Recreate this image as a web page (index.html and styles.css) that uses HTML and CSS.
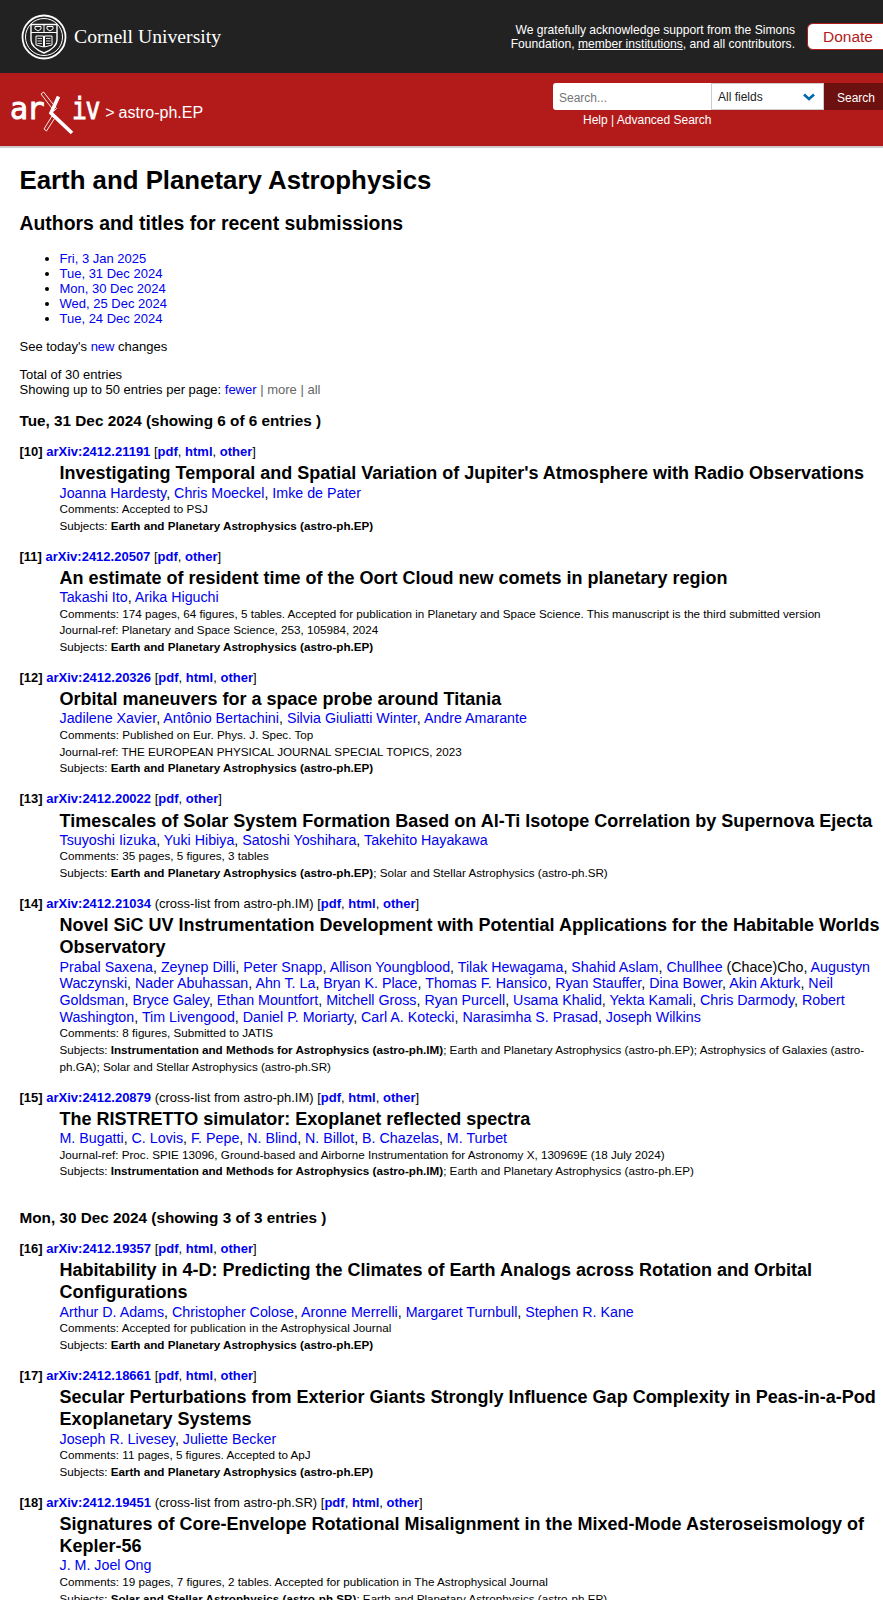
FILE: index.html
```html
<!DOCTYPE html>
<html lang="en">
<head>
    <meta charset="UTF-8">
    <meta name="viewport" content="width=device-width, initial-scale=1.0">
    <title>Earth and Planetary Astrophysics</title>
    <link rel="stylesheet" href="styles.css">
</head>
<body>
    <div class="cu-bar">
        <a class="cu-logo" href="#">
            <svg class="cu-seal" width="46" height="46" viewBox="0 0 46 46" fill="none" stroke="#fff">
                <circle cx="23" cy="23" r="21.5" stroke-width="1.8"/>
                <circle cx="23" cy="23" r="18.5" stroke-width="1"/>
                <path d="M10 10.500H36V26C36 33 29 36.500 23 39C17 36.500 10 33 10 26Z" stroke-width="1.400"/>
                <path d="M10 18.500H36M23 11V18.500" stroke-width="1"/>
                <path d="M14 12.500H20V15L17 17L14 15ZM26 12.500H32V15L29 17L26 15Z" stroke-width="1"/>
                <path d="M15 22H22.500V33L15 31ZM31 22H23.500V33L31 31Z" stroke-width="1"/>
                <path d="M16.500 24.500H21M16.500 27H21M16.500 29.500H21M25 24.500H29.500M25 27H29.500M25 29.500H29.500" stroke-width=".8"/>
            </svg>
            <span class="cu-name">Cornell University</span>
        </a>
        <p class="cu-thanks">We gratefully acknowledge support from the Simons Foundation, <a href="#">member institutions</a>, and all contributors.</p>
        <a class="donate" href="#">Donate</a>
    </div>

    <div class="arxiv-bar">
        <div class="crumbs">
            <a class="arxiv-logo" href="#">
                <span class="logo-ar">ar</span>
                <svg class="arxiv-x" width="34" height="45" viewBox="0 0 34 45" fill="none" stroke="#fff">
                    <path d="M1 4L3.500 2L16.500 18.500L14 21Z" stroke-width=".9"/>
                    <path d="M12 26L14.500 28.500L6.500 41L4 39Z" stroke-width=".9"/>
                    <path d="M18.500 6.500L11 23L32 43" stroke-width="3.600"/>
                </svg>
                <span class="logo-iv">iv</span>
            </a>
            <span class="crumb-sep">&gt;</span>
            <span class="crumb-cat">astro-ph.EP</span>
        </div>
        <div class="search-box">
            <div class="search-row">
                <input class="search-input" type="text" placeholder="Search...">
                <div class="search-field">
                    <span>All fields</span>
                    <svg width="12" height="8" viewBox="0 0 12 8" fill="none"><path d="M1 1.500L6 6L11 1.500" stroke="#0068ac" stroke-width="2.600"/></svg>
                </div>
                <button class="search-btn" type="button">Search</button>
            </div>
            <div class="search-links"><a href="#">Help</a> | <a href="#">Advanced Search</a></div>
        </div>
    </div>

    <div class="content">
        <h1>Earth and Planetary Astrophysics</h1>
        <h2>Authors and titles for recent submissions</h2>
        <ul class="days">
            <li><a href="#">Fri, 3 Jan 2025</a></li>
            <li><a href="#">Tue, 31 Dec 2024</a></li>
            <li><a href="#">Mon, 30 Dec 2024</a></li>
            <li><a href="#">Wed, 25 Dec 2024</a></li>
            <li><a href="#">Tue, 24 Dec 2024</a></li>
        </ul>
        <p class="note">See today's <a href="#">new</a> changes</p>
        <p class="note">Total of 30 entries<br>Showing up to 50 entries per page: <a href="#">fewer</a> <span class="off">| more | all</span></p>

        <h3>Tue, 31 Dec 2024 (showing 6 of 6 entries )</h3>
        <dl>
            <dt><b>[10]</b> <a class="id" href="#">arXiv:2412.21191</a> [<a href="#">pdf</a>, <a href="#">html</a>, <a href="#">other</a>]</dt>
            <dd>
                <div class="title">Investigating Temporal and Spatial Variation of Jupiter's Atmosphere with Radio Observations</div>
                <div class="authors"><a href="#">Joanna Hardesty</a>, <a href="#">Chris Moeckel</a>, <a href="#">Imke de Pater</a></div>
                <div class="meta">Comments: Accepted to PSJ</div>
                <div class="meta">Subjects: <b>Earth and Planetary Astrophysics (astro-ph.EP)</b></div>
            </dd>
            <dt><b>[11]</b> <a class="id" href="#">arXiv:2412.20507</a> [<a href="#">pdf</a>, <a href="#">other</a>]</dt>
            <dd>
                <div class="title">An estimate of resident time of the Oort Cloud new comets in planetary region</div>
                <div class="authors"><a href="#">Takashi Ito</a>, <a href="#">Arika Higuchi</a></div>
                <div class="meta">Comments: 174 pages, 64 figures, 5 tables. Accepted for publication in Planetary and Space Science. This manuscript is the third submitted version</div>
                <div class="meta">Journal-ref: Planetary and Space Science, 253, 105984, 2024</div>
                <div class="meta">Subjects: <b>Earth and Planetary Astrophysics (astro-ph.EP)</b></div>
            </dd>
            <dt><b>[12]</b> <a class="id" href="#">arXiv:2412.20326</a> [<a href="#">pdf</a>, <a href="#">html</a>, <a href="#">other</a>]</dt>
            <dd>
                <div class="title">Orbital maneuvers for a space probe around Titania</div>
                <div class="authors"><a href="#">Jadilene Xavier</a>, <a href="#">Antônio Bertachini</a>, <a href="#">Silvia Giuliatti Winter</a>, <a href="#">Andre Amarante</a></div>
                <div class="meta">Comments: Published on Eur. Phys. J. Spec. Top</div>
                <div class="meta">Journal-ref: THE EUROPEAN PHYSICAL JOURNAL SPECIAL TOPICS, 2023</div>
                <div class="meta">Subjects: <b>Earth and Planetary Astrophysics (astro-ph.EP)</b></div>
            </dd>
            <dt><b>[13]</b> <a class="id" href="#">arXiv:2412.20022</a> [<a href="#">pdf</a>, <a href="#">other</a>]</dt>
            <dd>
                <div class="title">Timescales of Solar System Formation Based on Al-Ti Isotope Correlation by Supernova Ejecta</div>
                <div class="authors"><a href="#">Tsuyoshi Iizuka</a>, <a href="#">Yuki Hibiya</a>, <a href="#">Satoshi Yoshihara</a>, <a href="#">Takehito Hayakawa</a></div>
                <div class="meta">Comments: 35 pages, 5 figures, 3 tables</div>
                <div class="meta">Subjects: <b>Earth and Planetary Astrophysics (astro-ph.EP)</b>; Solar and Stellar Astrophysics (astro-ph.SR)</div>
            </dd>
            <dt><b>[14]</b> <a class="id" href="#">arXiv:2412.21034</a> (cross-list from astro-ph.IM) [<a href="#">pdf</a>, <a href="#">html</a>, <a href="#">other</a>]</dt>
            <dd>
                <div class="title">Novel SiC UV Instrumentation Development with Potential Applications for the Habitable Worlds Observatory</div>
                <div class="authors"><a href="#">Prabal Saxena</a>, <a href="#">Zeynep Dilli</a>, <a href="#">Peter Snapp</a>, <a href="#">Allison Youngblood</a>, <a href="#">Tilak Hewagama</a>, <a href="#">Shahid Aslam</a>, <a href="#">Chullhee</a> (Chace)Cho, <a href="#">Augustyn Waczynski</a>, <a href="#">Nader Abuhassan</a>, <a href="#">Ahn T. La</a>, <a href="#">Bryan K. Place</a>, <a href="#">Thomas F. Hansico</a>, <a href="#">Ryan Stauffer</a>, <a href="#">Dina Bower</a>, <a href="#">Akin Akturk</a>, <a href="#">Neil Goldsman</a>, <a href="#">Bryce Galey</a>, <a href="#">Ethan Mountfort</a>, <a href="#">Mitchell Gross</a>, <a href="#">Ryan Purcell</a>, <a href="#">Usama Khalid</a>, <a href="#">Yekta Kamali</a>, <a href="#">Chris Darmody</a>, <a href="#">Robert Washington</a>, <a href="#">Tim Livengood</a>, <a href="#">Daniel P. Moriarty</a>, <a href="#">Carl A. Kotecki</a>, <a href="#">Narasimha S. Prasad</a>, <a href="#">Joseph Wilkins</a></div>
                <div class="meta">Comments: 8 figures, Submitted to JATIS</div>
                <div class="meta">Subjects: <b>Instrumentation and Methods for Astrophysics (astro-ph.IM)</b>; Earth and Planetary Astrophysics (astro-ph.EP); Astrophysics of Galaxies (astro-ph.GA); Solar and Stellar Astrophysics (astro-ph.SR)</div>
            </dd>
            <dt><b>[15]</b> <a class="id" href="#">arXiv:2412.20879</a> (cross-list from astro-ph.IM) [<a href="#">pdf</a>, <a href="#">html</a>, <a href="#">other</a>]</dt>
            <dd>
                <div class="title">The RISTRETTO simulator: Exoplanet reflected spectra</div>
                <div class="authors"><a href="#">M. Bugatti</a>, <a href="#">C. Lovis</a>, <a href="#">F. Pepe</a>, <a href="#">N. Blind</a>, <a href="#">N. Billot</a>, <a href="#">B. Chazelas</a>, <a href="#">M. Turbet</a></div>
                <div class="meta">Journal-ref: Proc. SPIE 13096, Ground-based and Airborne Instrumentation for Astronomy X, 130969E (18 July 2024)</div>
                <div class="meta">Subjects: <b>Instrumentation and Methods for Astrophysics (astro-ph.IM)</b>; Earth and Planetary Astrophysics (astro-ph.EP)</div>
            </dd>
        </dl>

        <h3 class="day-next">Mon, 30 Dec 2024 (showing 3 of 3 entries )</h3>
        <dl>
            <dt><b>[16]</b> <a class="id" href="#">arXiv:2412.19357</a> [<a href="#">pdf</a>, <a href="#">html</a>, <a href="#">other</a>]</dt>
            <dd>
                <div class="title">Habitability in 4-D: Predicting the Climates of Earth Analogs across Rotation and Orbital Configurations</div>
                <div class="authors"><a href="#">Arthur D. Adams</a>, <a href="#">Christopher Colose</a>, <a href="#">Aronne Merrelli</a>, <a href="#">Margaret Turnbull</a>, <a href="#">Stephen R. Kane</a></div>
                <div class="meta">Comments: Accepted for publication in the Astrophysical Journal</div>
                <div class="meta">Subjects: <b>Earth and Planetary Astrophysics (astro-ph.EP)</b></div>
            </dd>
            <dt><b>[17]</b> <a class="id" href="#">arXiv:2412.18661</a> [<a href="#">pdf</a>, <a href="#">html</a>, <a href="#">other</a>]</dt>
            <dd>
                <div class="title">Secular Perturbations from Exterior Giants Strongly Influence Gap Complexity in Peas-in-a-Pod Exoplanetary Systems</div>
                <div class="authors"><a href="#">Joseph R. Livesey</a>, <a href="#">Juliette Becker</a></div>
                <div class="meta">Comments: 11 pages, 5 figures. Accepted to ApJ</div>
                <div class="meta">Subjects: <b>Earth and Planetary Astrophysics (astro-ph.EP)</b></div>
            </dd>
            <dt><b>[18]</b> <a class="id" href="#">arXiv:2412.19451</a> (cross-list from astro-ph.SR) [<a href="#">pdf</a>, <a href="#">html</a>, <a href="#">other</a>]</dt>
            <dd>
                <div class="title">Signatures of Core-Envelope Rotational Misalignment in the Mixed-Mode Asteroseismology of Kepler-56</div>
                <div class="authors"><a href="#">J. M. Joel Ong</a></div>
                <div class="meta">Comments: 19 pages, 7 figures, 2 tables. Accepted for publication in The Astrophysical Journal</div>
                <div class="meta">Subjects: <b>Solar and Stellar Astrophysics (astro-ph.SR)</b>; Earth and Planetary Astrophysics (astro-ph.EP)</div>
            </dd>
        </dl>
    </div>
</body>
</html>
```

FILE: styles.css
```css
html, body {
    margin: 0;
    padding: 0;
}

body {
    font-family: "Liberation Sans", Arial, sans-serif;
    font-size: 13px;
    line-height: 15px;
    color: #000;
    background: #fff;
    overflow-x: hidden;
}

a {
    color: #0000ee;
    text-decoration: none;
}

/* Franja de Cornell */
.cu-bar {
    display: flex;
    align-items: center;
    height: 73px;
    background: #222;
    color: #fff;
    overflow: hidden;
}

.cu-logo {
    display: flex;
    align-items: center;
    gap: 7px;
    margin-left: 21px;
    color: #fff;
}

.cu-name {
    font-family: "Liberation Serif", serif;
    font-size: 19.700px;
}

.cu-thanks {
    width: 290px;
    margin: 0 0 0 auto;
    font-size: 12.100px;
    line-height: 14px;
    text-align: right;
}

.cu-thanks a {
    color: #fff;
    text-decoration: underline;
}

.donate {
    flex: none;
    box-sizing: border-box;
    width: 90px;
    height: 27px;
    margin: 0 -14px 0 12px;
    border: 1px solid #b31b1b;
    border-radius: 6px;
    background: #fff;
    color: #b31b1b;
    font-size: 15.500px;
    line-height: 25px;
    text-indent: 15px;
}

/* Franja roja de arXiv */
.arxiv-bar {
    display: flex;
    justify-content: space-between;
    height: 73px;
    background: #b31b1b;
    border-bottom: 2px solid #ccc;
    color: #fff;
}

.crumbs {
    display: flex;
    align-items: center;
    height: 73px;
    margin-left: 10px;
    font-size: 16px;
}

.arxiv-logo {
    display: flex;
    align-items: center;
    color: #fff;
    font-family: "DejaVu Sans Mono", monospace;
    font-size: 30px;
    letter-spacing: -1.500px;
    line-height: 45px;
    -webkit-text-stroke: .9px #fff;
}

.logo-ar,
.logo-iv {
    margin-top: -2px;
}

.logo-iv {
    margin-right: -3px;
    transform: scaleX(.82);
    transform-origin: left center;
}

.arxiv-x {
    margin: 6px -2px 0 -3px;
}

.crumb-sep {
    margin: 6px 0 0 3px;
}

.crumb-cat {
    margin: 6px 0 0 4px;
}

.search-box {
    width: 330px;
    margin-top: 10px;
}

.search-row {
    display: flex;
    height: 27px;
}

.search-input {
    box-sizing: border-box;
    width: 158px;
    height: 27px;
    padding: 2px 6px 0;
    border: none;
    border-radius: 3px 0 0 3px;
    font-family: inherit;
    font-size: 12px;
}

.search-input::placeholder {
    color: #757575;
}

.search-field {
    box-sizing: border-box;
    display: flex;
    align-items: center;
    justify-content: space-between;
    width: 113px;
    padding: 1px 8px 0 6px;
    background: #fff;
    border: 1px solid #ccc;
    color: #222;
    font-size: 12px;
}

.search-btn {
    flex: none;
    width: 59px;
    border: none;
    padding: 2px 0 0 5px;
    background: #6c1010;
    color: #fff;
    font-family: inherit;
    font-size: 12px;
}

.search-links {
    margin: 3px 0 0 30px;
    font-size: 12px;
    line-height: 14px;
}

.search-links a {
    color: #fff;
}

/* Contenido */
.content {
    padding: 0 0 0 19.500px;
}

h1 {
    margin: 18px 0 0;
    font-size: 25.800px;
    line-height: 28px;
}

h2 {
    margin: 18px 0 0;
    font-size: 19.400px;
    line-height: 22px;
}

.days {
    margin: 17px 0 0;
    padding-left: 40px;
}

.note {
    margin: 13px 0 0;
}

.off {
    color: #666;
}

h3 {
    margin: 16px 0 0;
    font-size: 15.300px;
    line-height: 16px;
}

h3.day-next {
    margin-top: 30px;
}

dl {
    margin: 15px 0 0;
}

dt {
    margin-top: 14.300px;
    line-height: 15px;
}

dt:first-child {
    margin-top: 0;
}

dt a {
    font-weight: bold;
}

dd {
    margin: 0 0 0 40px;
}

.title {
    margin-top: 3.300px;
    font-size: 18px;
    font-weight: bold;
    line-height: 22.200px;
}

.authors {
    font-size: 14.250px;
    line-height: 16.700px;
}

.meta {
    font-size: 11.670px;
    line-height: 16.600px;
}
```
